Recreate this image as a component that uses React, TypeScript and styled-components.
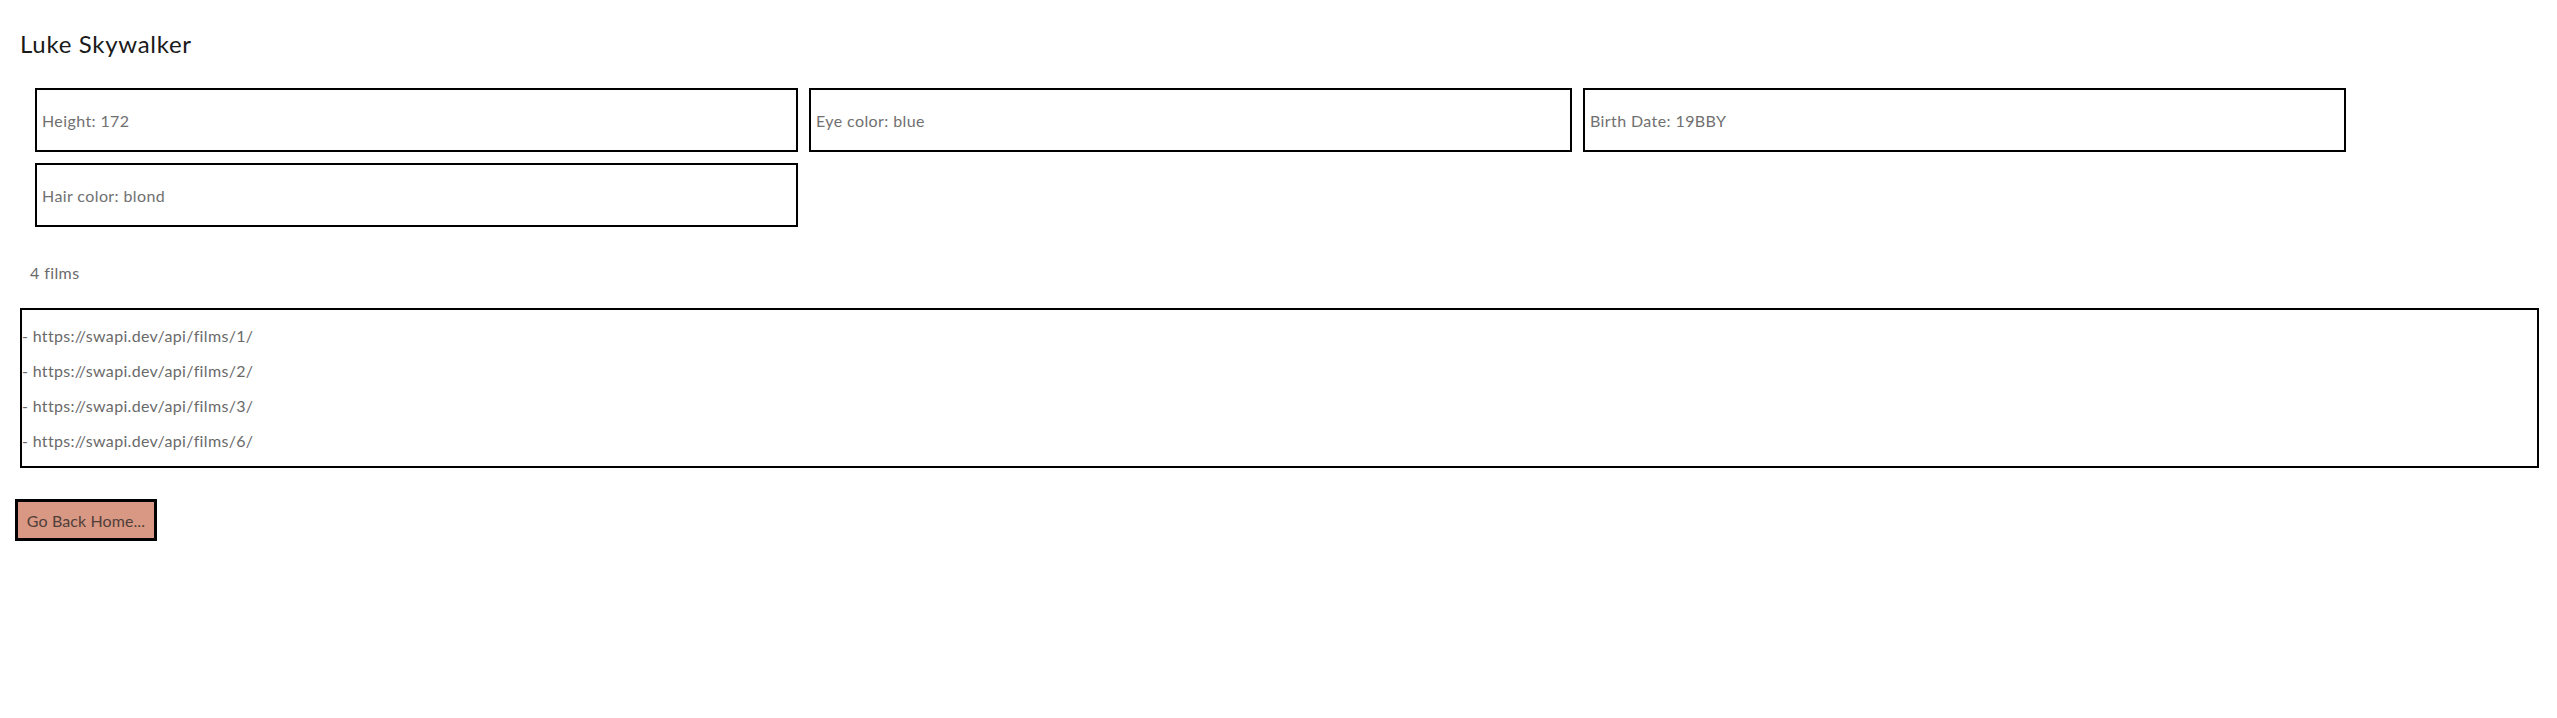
import React from "react";
import styled, { createGlobalStyle } from "styled-components";

const GlobalStyle = createGlobalStyle`
  html, body {
    margin: 0;
    padding: 0;
    background: #ffffff;
  }
  body {
    margin: 8px;
    font-family: "Lato", "Open Sans", "Liberation Sans", sans-serif;
    font-weight: 400;
    font-size: 16px;
  }
  * { box-sizing: border-box; }
`;

const Page = styled.div`
  display: flex;
  flex-direction: column;
  align-items: flex-start;
  padding-left: 7px;
`;

const Title = styled.h2`
  margin: 22px 0 0 5px;
  font-size: 24px;
  line-height: 28px;
  font-weight: 400;
  letter-spacing: 0.7px;
  color: #1a1a1a;
`;

const InfoGrid = styled.div`
  display: flex;
  flex-wrap: wrap;
  gap: 11px;
  width: 100%;
  margin-top: 30px;
  padding-left: 20px;
`;

const InfoBox = styled.div`
  flex: 0 0 763px;
  height: 64px;
  display: flex;
  align-items: center;
  padding-left: 5px;
  border: 2px solid #000;
  color: #707070;
  font-size: 16px;
  line-height: 19px;
  letter-spacing: 0.4px;
`;

const FilmCount = styled.p`
  margin: 36px 0 0 15px;
  font-size: 16px;
  line-height: 19px;
  letter-spacing: 0.4px;
  color: #6a6a6a;
`;

const FilmList = styled.div`
  align-self: stretch;
  margin: 26px 10px 0 5px;
  border: 2px solid #000;
  display: flex;
  flex-direction: column;
  gap: 16px;
  padding: 16px 0;
`;

const FilmLine = styled.p`
  margin: 0;
  font-size: 16px;
  line-height: 19px;
  letter-spacing: 0.33px;
  color: #6a6a6a;
`;

const HomeButton = styled.button`
  margin-top: 31px;
  width: 142px;
  height: 42px;
  padding: 0;
  border: 3px solid #000;
  background: #d99883;
  color: #4f3f3a;
  font-family: inherit;
  font-weight: 400;
  font-size: 16px;
  line-height: 19px;
  letter-spacing: 0.1px;
  cursor: pointer;
`;

const character = {
  name: "Luke Skywalker",
  info: [
    ["Height", "172"],
    ["Eye color", "blue"],
    ["Birth Date", "19BBY"],
    ["Hair color", "blond"],
  ],
  films: [
    "https://swapi.dev/api/films/1/",
    "https://swapi.dev/api/films/2/",
    "https://swapi.dev/api/films/3/",
    "https://swapi.dev/api/films/6/",
  ],
};

export default function App() {
  return (
    <>
      <GlobalStyle />
      <Page>
        <Title>{character.name}</Title>
        <InfoGrid>
          {character.info.map(([label, value]) => (
            <InfoBox key={label}>
              {label}: {value}
            </InfoBox>
          ))}
        </InfoGrid>
        <FilmCount>{character.films.length} films</FilmCount>
        <FilmList>
          {character.films.map((f) => (
            <FilmLine key={f}>- {f}</FilmLine>
          ))}
        </FilmList>
        <HomeButton>Go Back Home...</HomeButton>
      </Page>
    </>
  );
}
